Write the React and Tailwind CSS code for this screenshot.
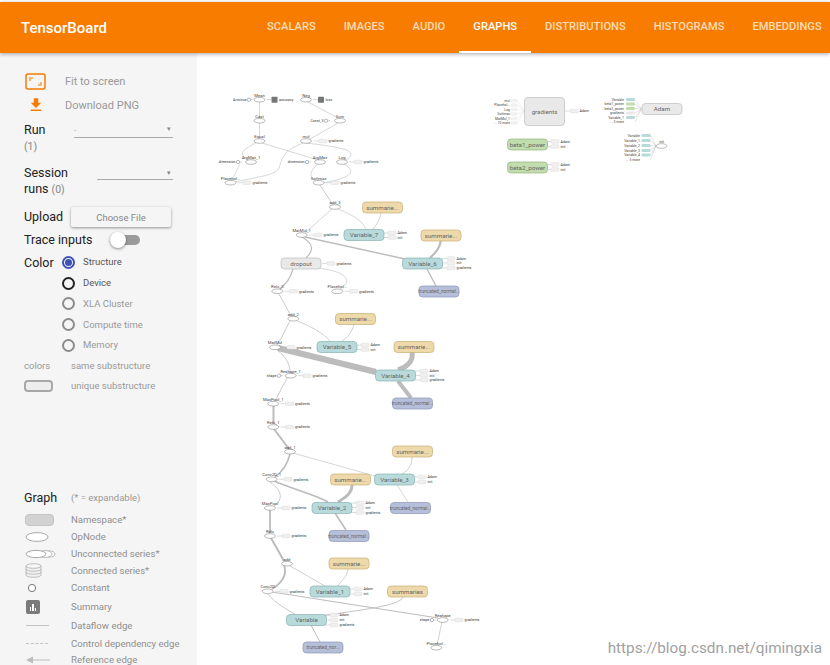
const tabs = ['Scalars', 'Images', 'Audio', 'Graphs', 'Distributions', 'Histograms', 'Embeddings'];
const colorModes = ['Structure', 'Device', 'XLA Cluster', 'Compute time', 'Memory'];

const TEAL = ['#b8dada', '#86b3b3'];
const SAND = ['#eed9ab', '#c9ad76'];
const PURPLE = ['#b6bfd9', '#8d97b8'];
const GREY = ['#e9e9e9', '#bdbdbd'];
const GREEN = ['#c2dcae', '#94b67e'];

const boxes = [
  ['gradients', 524.5, 97.5, 40, 28, GREY],
  ['Adam', 642, 103.5, 40, 11, GREY],
  ['beta1_power', 507.5, 139, 40, 11, GREEN],
  ['beta2_power', 507.5, 162, 40, 11, GREEN],
  ['summarie...', 362.5, 202, 40, 11, SAND],
  ['Variable_7', 344, 229.5, 40, 11, TEAL],
  ['summarie...', 421, 230, 40, 11, SAND],
  ['dropout', 281, 258, 40, 11, GREY],
  ['Variable_6', 402.5, 258, 40, 11, TEAL],
  ['truncated_normal...', 419, 286, 40, 11, PURPLE],
  ['summarie...', 335.5, 313.5, 40, 11, SAND],
  ['Variable_5', 317, 341.5, 40, 11, TEAL],
  ['summarie...', 394, 341.5, 40, 11, SAND],
  ['Variable_4', 375.5, 370, 40, 11, TEAL],
  ['truncated_normal...', 392.5, 398, 40, 11, PURPLE],
  ['summarie...', 392.5, 446, 40, 11, SAND],
  ['Variable_3', 374.5, 474, 40, 11, TEAL],
  ['summarie...', 330.5, 474, 40, 11, SAND],
  ['Variable_2', 312, 502.5, 40, 11, TEAL],
  ['truncated_normal...', 390.5, 502.5, 40, 11, PURPLE],
  ['truncated_normal...', 329, 530.5, 40, 11, PURPLE],
  ['summarie...', 329, 558, 40, 11, SAND],
  ['Variable_1', 310, 586, 40, 11, TEAL],
  ['summaries', 387.5, 586, 40, 11, SAND],
  ['Variable', 286.5, 614.5, 40, 11, TEAL],
  ['truncated_nor...', 303, 642, 40, 11, PURPLE],
];

const ops = [
  ['Mean', 259.5, 99.7], ['Neg', 306, 99.7], ['Cast', 259.5, 120.7], ['Sum', 340, 120.7],
  ['Equal', 259.5, 141], ['mul', 306, 141], ['ArgMax_1', 251, 162], ['ArgMax', 320, 162],
  ['Log', 342, 162], ['Placehol...', 230.5, 182.7], ['Softmax', 318.7, 182.7], ['add_3', 335, 207],
  ['MatMul_1', 301.7, 235], ['Relu_2', 277.3, 291.3], ['Placehol...', 337.3, 291.3], ['add_2', 293.3, 318.7],
  ['MatMul', 275, 347.3], ['Reshape_1', 290.7, 375.7], ['MaxPool_1', 273.3, 403.7], ['Relu_1', 273.3, 427],
  ['add_1', 290, 451.7], ['Conv2D_1', 271.7, 479.3], ['MaxPool', 270, 508], ['Relu', 270, 536],
  ['add', 287, 563.7], ['Conv2D', 267.7, 591.3], ['Reshape', 442.7, 620], ['Placehol...', 436.3, 647.7],
];

// [path, width]
const edges = [
  ['M259.5 102 V118', 0.6], ['M259.5 123 V138', 0.6], ['M308 102 L338 118', 0.6],
  ['M338 123 L310 139', 0.6], ['M303 143 C285 150 283 155 279 168 C276 176 250 178 235 182', 0.6],
  ['M262 143 L318 160', 0.6], ['M256 143 C240 150 240 155 247 160', 0.6], ['M240 164 L232 180', 0.5],
  ['M318 164 C308 172 310 178 316 181', 0.6], ['M344 164 C358 172 350 178 323 183', 0.6],
  ['M306 143 C350 148 358 152 346 160', 0.6], ['M320 185 L333 205', 0.8],
  ['M332 209 L305 233', 0.6], ['M338 209 C355 216 364 222 366 230', 0.6], ['M382 202 C382 216 378 224 372 230', 0.7],
  ['M305 237 L405 259', 1.4], ['M302 237 C316 245 312 252 306 258', 1.2], ['M441 240 C440 248 436 252 430 258', 2.2],
  ['M427 269 L436 286', 1.3], ['M293 269 C290 280 285 284 280 289', 1.2],
  ['M318 268 C350 272 352 282 340 289', 0.6], ['M279 294 L291 316', 0.8],
  ['M290 321 C284 332 282 338 277 345', 0.8], ['M297 321 C310 326 322 332 330 341', 0.7],
  ['M355 314 C355 328 350 336 342 341', 0.7], ['M278 348 L376 372', 6], ['M412 352 C414 362 405 368 398 370', 5],
  ['M398 381 L411 398', 4], ['M276 349 C288 358 290 366 290 373', 0.8], ['M287 378 L275 401', 0.8],
  ['M273.5 406 V424', 2], ['M274 429 L289 449', 2], ['M290 454 C287 466 282 472 275 477', 1.6],
  ['M293 453 L375 476', 0.6], ['M412 457 C412 466 408 470 402 474', 0.7], ['M274 481 C290 488 318 496 328 502', 1.6],
  ['M352 485 C352 494 344 498 338 502', 3], ['M397 485 L408 502', 0.6], ['M270 482 C284 492 282 500 274 506', 0.8],
  ['M335 513 L346 530', 1.6], ['M270 510 V533', 1.8], ['M271 538 L284 561', 2], ['M284 565 C288 576 280 584 272 589', 1.8],
  ['M290 566 L325 586', 0.7], ['M348 569 C348 576 340 582 338 586', 0.7], ['M272 592 L438 618', 1],
  ['M268 594 C276 604 288 610 295 614', 0.8], ['M403 597 C400 606 360 610 320 616', 0.9], ['M311 625 L320 642', 1],
  ['M442 622 L437 645', 0.7],
];

const constants = [
  ['Arminus', 249, 99.7], ['Const_3', 326, 120.7], ['dimension', 238, 162],
  ['dimension', 307, 162], ['shape', 279, 375.7], ['shape', 432, 620],
];

const summaries = [['accuracy', 274.5, 99.7], ['loss', 321, 99.7]];

// little "gradients" / "Adam" stubs hanging off the right of a node
const chips = [
  [243, 182.7, 'gradients'], [331, 182.7, 'gradients'], [319, 141, 'gradients'], [354, 162, 'gradients'],
  [314, 235, 'gradients'], [289.5, 291.3, 'gradients'], [349.5, 291.3, 'gradients'], [327, 263.5, 'gradients'],
  [287, 347.3, 'gradients'], [303, 375.7, 'gradients'], [285.5, 403.7, 'gradients'], [285.5, 427, 'gradients'],
  [284, 479.3, 'gradients'], [282, 508, 'gradients'], [282, 536, 'gradients'], [280, 591.3, 'gradients'],
  [455, 620, 'gradients'], [570, 111, 'Adam'],
  [388, 233, 'Adam'], [388, 237.5, 'init'], [447, 258.5, 'Adam'], [447, 263, 'init'], [447, 268, 'gradients'],
  [361, 345, 'Adam'], [361, 349.5, 'init'], [420, 371, 'Adam'], [420, 375.5, 'init'], [420, 380, 'gradients'],
  [418, 477, 'Adam'], [418, 482, 'init'], [356, 503, 'Adam'], [356, 507.5, 'init'], [356, 512.5, 'gradients'],
  [354, 589, 'Adam'], [354, 594, 'init'], [330, 615, 'Adam'], [330, 620, 'init'], [330, 625, 'gradients'],
  [551, 141.5, 'Adam'], [551, 146.5, 'init'], [551, 164.5, 'Adam'], [551, 169.5, 'init'],
];

const gradientInputs = [['mul', 100.5], ['Placehol...', 105], ['Log', 109.5], ['Softmax', 114], ['MatMul_1', 118.5], ['... 10 more', 123]];
const adamInputs = [['Variable', 99.5, TEAL], ['beta1_power', 104, GREEN], ['beta2_power', 108.5, GREEN], ['gradients', 113, GREY], ['Variable_1', 117.5, TEAL], ['... 3 more', 122, null]];
const initInputs = [['Variable', 135.5], ['Variable_1', 140.5], ['Variable_2', 145.5], ['Variable_3', 150.5], ['Variable_4', 155], ['... 5 more', 159.5]];

function Graph() {
  return (
    <svg viewBox="197 53 633 612" className="w-full h-full" style={{ fontFamily: 'Roboto, sans-serif' }}>
      {edges.map(([d, w], i) => (
        <path key={i} d={d} fill="none" stroke="#bcbcbc" strokeWidth={w} />
      ))}

      {chips.map(([x, y, label], i) => (
        <g key={i}>
          <line x1={x - 5} y1={y} x2={x} y2={y} stroke="#bbb" strokeWidth="0.5" />
          <rect x={x} y={y - 1.8} width="8" height="3.6" rx="1" fill="#f0f0f0" stroke="#d4d4d4" strokeWidth="0.4" />
          <text x={x + 9.5} y={y + 1.3} fontSize="3.6" fill="#333">{label}</text>
        </g>
      ))}

      {constants.map(([label, x, y], i) => (
        <g key={i}>
          <text x={x - 2.5} y={y + 1.3} fontSize="3.6" textAnchor="end" fill="#333">{label}</text>
          <circle cx={x} cy={y} r="1.7" fill="#fff" stroke="#777" strokeWidth="0.5" />
          <line x1={x + 1.7} y1={y} x2={x + 4} y2={y} stroke="#aaa" strokeWidth="0.5" />
        </g>
      ))}

      {summaries.map(([label, x, y], i) => (
        <g key={i}>
          <rect x={x - 3} y={y - 3} width="6" height="6" rx="0.8" fill="#777" />
          <text x={x + 4.5} y={y + 1.3} fontSize="3.6" fill="#333">{label}</text>
          <line x1={x - 8} y1={y} x2={x - 3} y2={y} stroke="#aaa" strokeWidth="0.5" />
        </g>
      ))}

      {ops.map(([label, x, y], i) => (
        <g key={i}>
          <ellipse cx={x} cy={y} rx="5.5" ry="2.3" fill="#fff" stroke="#777" strokeWidth="0.5" />
          <text x={x} y={y - 3.2} fontSize="4.2" textAnchor="middle" fill="#444">{label}</text>
        </g>
      ))}

      {gradientInputs.map(([label, y], i) => (
        <g key={i}>
          <text x="510" y={y + 1.2} fontSize="3.4" textAnchor="end" fill="#444">{label}</text>
          <rect x="511" y={y - 1.3} width="6" height="2.6" rx="1" fill="#f3f3f3" stroke="#ddd" strokeWidth="0.3" />
          <line x1="517" y1={y} x2="524.5" y2="111" stroke="#ccc" strokeWidth="0.3" />
        </g>
      ))}
      {adamInputs.map(([label, y, c], i) => (
        <g key={i}>
          <text x="624" y={y + 1.2} fontSize="3.4" textAnchor="end" fill="#444">{label}</text>
          {c && <rect x="626" y={y - 1.6} width="9" height="3.2" rx="1" fill={c[0]} />}
          <line x1="635" y1={y} x2="641.5" y2="109" stroke="#bbb" strokeWidth="0.4" />
        </g>
      ))}
      {initInputs.map(([label, y], i) => (
        <g key={i}>
          <text x="640" y={y + 1.2} fontSize="3.4" textAnchor="end" fill="#444">{label}</text>
          {i < 5 && <rect x="641.5" y={y - 1.6} width="9" height="3.2" rx="1" fill={TEAL[0]} />}
          <line x1="650.5" y1={y} x2="656" y2="146" stroke="#bbb" strokeWidth="0.4" />
        </g>
      ))}
      <ellipse cx="661.5" cy="146" rx="5.5" ry="2.3" fill="#fff" stroke="#777" strokeWidth="0.5" />
      <text x="661.5" y="142.5" fontSize="3.6" textAnchor="middle" fill="#444">init</text>

      {boxes.map(([label, x, y, w, h, [fill, stroke]], i) => (
        <g key={i}>
          <rect x={x} y={y} width={w} height={h} rx="3.5" fill={fill} stroke={stroke} strokeWidth="0.7" />
          <text
            x={x + w / 2}
            y={y + h / 2 + (label.startsWith('truncated') ? 1.5 : 2.2)}
            fontSize={label.startsWith('truncated') ? 4.8 : 6.2}
            textAnchor="middle"
            fill="#666"
          >
            {label}
          </text>
        </g>
      ))}
    </svg>
  );
}

function Radio({ label, state }) {
  const ring = state === 'checked' ? 'border-[#3f51b5]' : state === 'focus' ? 'border-[#222222]' : 'border-[#8c8c8c]';
  const text = state === 'off' ? 'text-[#999999]' : 'text-[#555555]';
  return (
    <div className="h-[20.8px] flex items-center gap-[8px]">
      <div className={`w-[13px] h-[13px] rounded-full border-2 flex items-center justify-center ${ring}`}>
        {state === 'checked' && <div className="w-[7px] h-[7px] rounded-full bg-[#3f51b5]"></div>}
      </div>
      <span className={`text-[9.5px] ${text}`}>{label}</span>
    </div>
  );
}

function LegendRow({ icon, label, height }) {
  return (
    <div className="flex items-center" style={{ height }}>
      <div className="w-[47px] flex items-center justify-start">{icon}</div>
      <span className="text-[9.6px] text-[#8f8f8f] whitespace-nowrap">{label}</span>
    </div>
  );
}

function Sidebar() {
  return (
    <aside className="w-[197px] shrink-0 bg-[#f5f5f5] pl-[24px] pt-[17px] overflow-hidden">
      <div className="h-[24px] flex items-center">
        <svg width="21" height="18" viewBox="0 0 21 18" className="ml-[1px]">
          <rect x="1" y="1" width="19" height="15" rx="2" fill="none" stroke="#f57c00" strokeWidth="1.5" />
          <path d="M5 8V5h3M16 9v3h-3" fill="none" stroke="#f9a24a" strokeWidth="1.6" />
        </svg>
        <span className="ml-[19px] text-[11px] text-[#999999]">Fit to screen</span>
      </div>
      <div className="h-[24px] flex items-center">
        <svg width="18" height="18" viewBox="0 0 24 24" fill="#f57c00" className="ml-[3px] mt-[-2px]">
          <path d="M19 9h-4V3H9v6H5l7 7 7-7zM5 18v2h14v-2H5z" />
        </svg>
        <span className="ml-[20px] text-[11px] text-[#999999]">Download PNG</span>
      </div>

      <div className="mt-[3px] h-[18px] flex items-center">
        <span className="w-[50px] text-[12.5px] text-[#212121]">Run</span>
        <div className="w-[99px] h-[16px] border-b border-[#aaaaaa] flex items-start justify-between text-[9px] text-[#888888]">
          <span>.</span>
          <span className="text-[7px] mt-[2px] mr-[2px]">▾</span>
        </div>
      </div>
      <div className="h-[16px] text-[10.5px] leading-[16px] text-[#888888]">(1)</div>

      <div className="mt-[10px] flex">
        <div className="w-[73px] text-[12.5px] leading-[16px] text-[#212121]">
          Session<br />runs <span className="text-[10.5px] text-[#888888]">(0)</span>
        </div>
        <div className="w-[76px] h-[15px] border-b border-[#aaaaaa] flex justify-end text-[7px] text-[#888888]">
          <span className="mr-[2px] mt-[3px]">▾</span>
        </div>
      </div>

      <div className="mt-[9px] h-[20px] flex items-center">
        <span className="w-[47px] text-[12.5px] text-[#212121]">Upload</span>
        <button className="w-[100px] h-[20px] bg-[#f5f5f5] rounded-[2px] shadow-[0_1px_3px_rgba(0,0,0,0.4)] text-[9.5px] text-[#888888] pt-[3px]">
          Choose File
        </button>
      </div>

      <div className="mt-[3px] h-[20px] flex items-center">
        <span className="w-[86px] text-[12.5px] text-[#212121]">Trace inputs</span>
        <div className="relative w-[30px] h-[10px] rounded-full bg-[#9b9b9b]">
          <div className="absolute left-0 top-[-3px] w-[16px] h-[16px] rounded-full bg-white shadow-[0_1px_3px_rgba(0,0,0,0.45)]"></div>
        </div>
      </div>

      <div className="mt-[2px] flex">
        <span className="w-[38px] text-[12.5px] leading-[21px] text-[#212121]">Color</span>
        <div className="flex flex-col">
          {colorModes.map((m, i) => (
            <Radio key={m} label={m} state={i === 0 ? 'checked' : i === 1 ? 'focus' : 'off'} />
          ))}
        </div>
      </div>

      <div className="h-[20px] flex items-center text-[9.5px] text-[#999999]">
        <span className="w-[47px]">colors</span>
        <span>same substructure</span>
      </div>
      <div className="h-[20px] flex items-center text-[9.5px] text-[#999999]">
        <div className="w-[47px]">
          <div className="w-[29px] h-[12px] rounded-[4px] bg-[#eeeeee] border-2 border-[#a8a8a8]"></div>
        </div>
        <span>unique substructure</span>
      </div>

      <div className="mt-[92px] h-[20px] flex items-center">
        <span className="w-[47px] text-[12.5px] text-[#212121]">Graph</span>
        <span className="text-[9.5px] text-[#999999]">(* = expandable)</span>
      </div>
      <div className="mt-[3.5px]">
        <LegendRow
          height="17px"
          label="Namespace*"
          icon={<div className="ml-[1px] w-[29px] h-[12px] rounded-[4px] bg-[#d2d2d2] border border-[#c4c4c4]"></div>}
        />
        <LegendRow
          height="17px"
          label="OpNode"
          icon={<svg width="26" height="12" className="ml-[1px]"><ellipse cx="12" cy="6" rx="11" ry="4.4" fill="#fff" stroke="#aaa" /></svg>}
        />
        <LegendRow
          height="17px"
          label="Unconnected series*"
          icon={
            <svg width="32" height="12" className="ml-[1px]">
              <ellipse cx="24" cy="6" rx="6" ry="3.2" fill="#fff" stroke="#bbb" />
              <ellipse cx="20" cy="6" rx="7" ry="3.4" fill="#fff" stroke="#bbb" />
              <ellipse cx="11" cy="6" rx="10" ry="3.6" fill="#fff" stroke="#aaa" />
            </svg>
          }
        />
        <LegendRow
          height="17px"
          label="Connected series*"
          icon={
            <svg width="18" height="15" className="ml-[1px]">
              <path d="M1 3v9c0 3 15 3 15 0V3" fill="#f1f1f1" stroke="#bbb" />
              <path d="M1 6c0 3 15 3 15 0M1 9c0 3 15 3 15 0" fill="none" stroke="#bbb" />
              <ellipse cx="8.5" cy="3" rx="7.5" ry="2.3" fill="#f8f8f8" stroke="#bbb" />
            </svg>
          }
        />
        <LegendRow
          height="17px"
          label="Constant"
          icon={<svg width="10" height="10" className="ml-[3px]"><circle cx="5" cy="5" r="3.6" fill="#fff" stroke="#777" /></svg>}
        />
        <LegendRow
          height="21px"
          label="Summary"
          icon={
            <div className="ml-[2px] w-[14px] h-[14px] rounded-[2px] bg-[#7b7b7b] flex items-end justify-center gap-[1px] pb-[3px]">
              <div className="w-[1.5px] h-[4px] bg-white"></div>
              <div className="w-[1.5px] h-[7px] bg-white"></div>
              <div className="w-[1.5px] h-[3px] bg-white"></div>
            </div>
          }
        />
        <LegendRow
          height="17px"
          label="Dataflow edge"
          icon={<div className="ml-[2px] w-[23px] h-[1px] bg-[#c4c4c4]"></div>}
        />
        <LegendRow
          height="19px"
          label="Control dependency edge"
          icon={<div className="ml-[2px] w-[22px] border-t border-dashed border-[#c4c4c4]"></div>}
        />
        <LegendRow
          height="13px"
          label="Reference edge"
          icon={
            <svg width="26" height="8" className="ml-[1px]">
              <path d="M7 4H25" stroke="#bbb" />
              <path d="M1 4L8 0.5V7.5Z" fill="#bbb" />
            </svg>
          }
        />
      </div>
    </aside>
  );
}

export default function App() {
  return (
    <div className="relative w-[830px] h-[665px] overflow-hidden bg-white flex flex-col pt-[2px]" style={{ fontFamily: 'Roboto, sans-serif' }}>
      <header className="relative z-10 h-[51px] shrink-0 bg-[#f77c00] flex items-center pl-[21px] shadow-[0_1px_4px_rgba(0,0,0,0.35)]">
        <span className="w-[232px] shrink-0 mt-[1px] text-[15px] font-medium text-white">TensorBoard</span>
        <nav className="flex h-full shrink-0">
          {tabs.map((t) => (
            <div
              key={t}
              className={`h-full px-[14px] pt-[2px] flex items-center border-b-2 text-[11.15px] font-medium uppercase whitespace-nowrap ${
                t === 'Graphs' ? 'border-white text-white' : 'border-transparent text-[#fcdcb8]'
              }`}
            >
              {t}
            </div>
          ))}
        </nav>
      </header>
      <div className="flex flex-1 min-h-0">
        <Sidebar />
        <main className="flex-1 min-w-0">
          <Graph />
        </main>
      </div>
      <span className="absolute right-[8px] bottom-[5px] text-[15.3px] text-[#8a8a8a] opacity-80">
        https://blog.csdn.net/qimingxia
      </span>
    </div>
  );
}
